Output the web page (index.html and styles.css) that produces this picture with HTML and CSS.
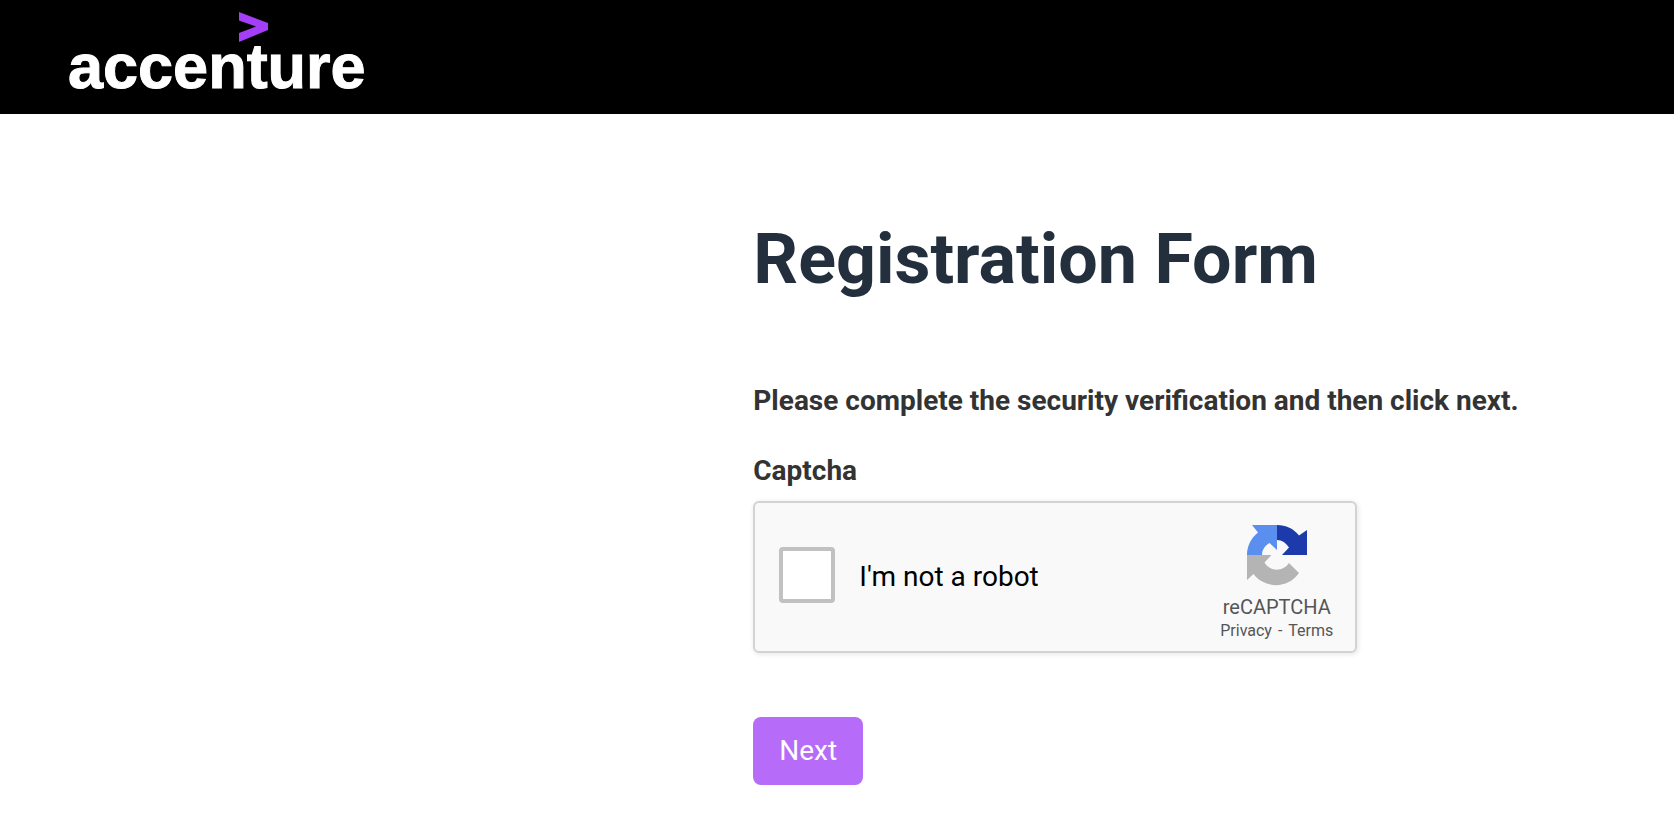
FILE: index.html
```html
<!DOCTYPE html>
<html lang="en">
<head>
<meta charset="utf-8">
<meta name="viewport" content="width=device-width, initial-scale=1">
<title>Registration Form</title>
<link rel="stylesheet" href="styles.css">
</head>
<body>
<header class="site-header">
  <svg class="brand" width="300" height="84" viewBox="0 0 300 84" role="img" aria-label="accenture">
    <path class="brand-mark" d="M171 2 200 13V20L171 32V23L188 16.500 171 10.500Z"/>
    <text class="brand-name" x="0" y="78">accenture</text>
  </svg>
</header>
<main class="content">
  <h1 class="title">Registration Form</h1>
  <form class="form">
    <p class="intro">Please complete the security verification and then click next.</p>
    <h2 class="field-name">Captcha</h2>
    <div class="captcha">
      <input class="captcha-check" type="checkbox" id="robot">
      <label class="captcha-label" for="robot">I'm not a robot</label>
      <div class="captcha-brand">
        <svg class="captcha-logo" width="64" height="64" viewBox="0 0 64 64" aria-hidden="true">
          <path fill="#1c3aa9" d="M32 2C41 2 48.500 5.500 54 12.500L62 7V32H37L44 24.500C41 20 37 17 32 17Z"/>
          <path fill="#5a8ff0" d="M32 2V27L24.500 20C20 22.500 17 27 17 32H2C2 23 6 15 13 9.500L7 2Z"/>
          <path fill="#b4b4b4" d="M2 32H26.500L19.500 39.500C25 49 38 49 44 40L54 50C43 66 20 66 8.500 51L2 57Z"/>
        </svg>
        <span class="captcha-name">reCAPTCHA</span>
        <span class="captcha-links"><a href="#privacy">Privacy</a><span aria-hidden="true">-</span><a href="#terms">Terms</a></span>
      </div>
    </div>
    <button class="next" type="submit">Next</button>
  </form>
</main>
</body>
</html>
```
FILE: styles.css
```css
* { box-sizing: border-box; }

body {
  margin: 0;
  background: #fff;
  color: #333;
  font-family: Roboto, "Liberation Sans", sans-serif;
  font-size: 28px;
  line-height: 40px;
}

.site-header {
  background: #000;
  padding: 10px 68px 20px;
}

.brand { display: block; overflow: visible; }
.brand-mark { fill: #a53ef7; }
.brand-name {
  fill: #fff;
  stroke: #fff;
  stroke-width: 1px;
  font-family: "Liberation Sans", Arial, sans-serif;
  font-size: 63px;
  font-weight: 700;
}

.content { padding: 105px 24px 48px 45%; }

.title {
  margin: 0;
  color: #242f3e;
  font-size: 70px;
  font-weight: 700;
  line-height: 80px;
}

.form {
  display: flex;
  flex-direction: column;
  align-items: flex-start;
}

.intro {
  margin: 82px 0 30px;
  font-weight: 700;
}

.field-name {
  margin: 0 0 10px;
  font-size: 28px;
  font-weight: 700;
}

.captcha {
  display: flex;
  align-items: center;
  gap: 24px;
  width: 100%;
  max-width: 604px;
  min-height: 152px;
  padding: 0 22px 0 24px;
  border: 2px solid #d3d3d3;
  border-radius: 6px;
  background: #f9f9f9;
  box-shadow: 1px 1px 4px 1px rgba(0, 0, 0, 0.08);
}

.captcha-check {
  appearance: none;
  flex: none;
  width: 56px;
  height: 56px;
  margin: 0 0 4px;
  border: 4px solid #c1c1c1;
  border-radius: 4px;
  background: #fff;
}

.captcha-check:checked { background: #5a8ff0; }

.captcha-label { color: #000; }

.captcha-brand {
  display: flex;
  flex-direction: column;
  align-items: center;
  margin-left: auto;
  padding-top: 12px;
  color: #555;
  font-size: 20px;
  line-height: 24px;
}

.captcha-logo { display: block; margin-bottom: 8px; }

.captcha-links {
  display: flex;
  gap: 6px;
  font-size: 16px;
}

.captcha-links a { color: inherit; text-decoration: none; }

.next {
  margin-top: 64px;
  padding: 14px 26px;
  border: 0;
  border-radius: 8px;
  background: #b76cf9;
  color: #fff;
  font: inherit;
}
```
